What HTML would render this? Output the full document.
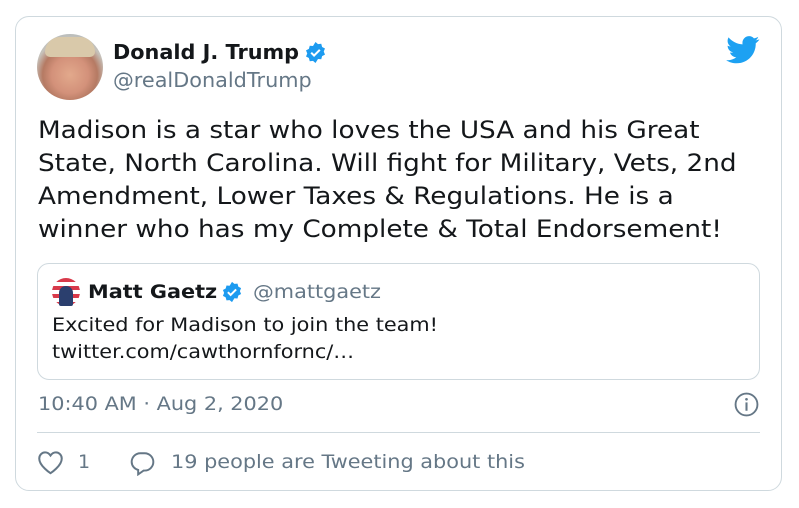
<!DOCTYPE html>
<html><head><meta charset="utf-8"><style>
*{margin:0;padding:0;box-sizing:border-box}
body{width:799px;height:508px;background:#fff;font-family:"DejaVu Sans","Liberation Sans",sans-serif;position:relative;overflow:hidden;color:#14171a}
.card{position:absolute;left:15px;top:16px;width:767px;height:475px;border:1px solid #cfd9de;border-radius:14px}
.a{position:absolute;white-space:nowrap}
.s{transform-origin:0 0;transform:scaleX(1.095)}
</style></head><body>
<div class="card"></div>
<div class="a" style="left:37px;top:34px;width:66px;height:66px;border-radius:50%;background:radial-gradient(circle at 50% 62%,#e2a98c 0,#d3917a 35%,#b57a63 52%,#c6c2bb 68%,#9fb3c2 100%)"></div>
<div class="a" style="left:45px;top:37px;width:50px;height:20px;border-radius:24px 24px 8px 8px;background:#d9c9aa"></div>
<div class="a" style="left:113px;top:38px;font-size:20px;font-weight:bold;line-height:28px;transform-origin:0 0;transform:scaleX(1.04)">Donald J. Trump</div>
<svg class="a" style="left:304px;top:41px" width="23" height="23" viewBox="0 0 24 24"><path fill="#1d9bf0" d="M12 1l2.6 2.2 3.4-.3.9 3.3 3 1.6-1.3 3.2 1.3 3.2-3 1.6-.9 3.3-3.4-.3L12 23l-2.6-2.2-3.4.3-.9-3.3-3-1.6L3.4 13 2.1 9.8l3-1.6.9-3.3 3.4.3z"/><path d="M7.5 12.2l3 3 6-6" stroke="#fff" stroke-width="2.2" fill="none"/></svg>
<div class="a" style="left:113px;top:67px;font-size:20px;color:#657786;line-height:26px;transform-origin:0 0;transform:scaleX(1.04)">@realDonaldTrump</div>
<svg class="a" style="left:726px;top:36px" width="34" height="28" viewBox="0 0 24 20"><path fill="#1da1f2" d="M23.6 2.4c-.9.4-1.8.6-2.8.8 1-.6 1.8-1.5 2.1-2.7-.9.6-2 1-3.1 1.2C19 .7 17.8.1 16.4.1c-2.7 0-4.8 2.2-4.8 4.8 0 .4 0 .8.1 1.1C7.7 5.8 4.1 3.9 1.7 1 1.3 1.7 1 2.6 1 3.5c0 1.7.9 3.2 2.2 4-.8 0-1.5-.2-2.2-.6v.1c0 2.3 1.7 4.3 3.9 4.7-.4.1-.8.2-1.3.2-.3 0-.6 0-.9-.1.6 1.9 2.4 3.300 4.5 3.4-1.700 1.3-3.7 2.1-6 2.1H0c2.1 1.4 4.7 2.2 7.4 2.2 8.9 0 13.7-7.4 13.7-13.7v-.6c1-.7 1.8-1.6 2.5-2.5z"/></svg>
<div class="a s" style="left:38px;top:114px;font-size:24px;line-height:33px;color:#14171a">Madison is a star who loves the USA and his Great<br>State, North Carolina. Will fight for Military, Vets, 2nd<br>Amendment, Lower Taxes &amp; Regulations. He is a<br>winner who has my Complete &amp; Total Endorsement!</div>
<div class="a" style="left:37px;top:263px;width:723px;height:117px;border:1px solid #cfd9de;border-radius:12px"></div>
<div class="a" style="left:52px;top:278px;width:28px;height:28px;border-radius:50%;background:repeating-linear-gradient(180deg,#d8394a 0 4px,#fff 4px 8px)"></div>
<div class="a" style="left:59px;top:286px;width:14px;height:20px;border-radius:7px 7px 2px 2px;background:#2b3f6e"></div>
<div class="a s" style="left:88px;top:279px;font-size:19px;font-weight:bold;line-height:26px">Matt Gaetz</div>
<svg class="a" style="left:221px;top:281px" width="22" height="22" viewBox="0 0 24 24"><path fill="#1d9bf0" d="M12 1l2.6 2.2 3.4-.3.9 3.3 3 1.6-1.3 3.2 1.3 3.2-3 1.6-.9 3.3-3.4-.3L12 23l-2.6-2.2-3.4.3-.9-3.3-3-1.6L3.4 13 2.1 9.8l3-1.6.9-3.3 3.4.3z"/><path d="M7.5 12.2l3 3 6-6" stroke="#fff" stroke-width="2.2" fill="none"/></svg>
<div class="a s" style="left:253px;top:279px;font-size:19px;color:#657786;line-height:26px">@mattgaetz</div>
<div class="a s" style="left:52px;top:312px;font-size:19px;line-height:27px">Excited for Madison to join the team!<br>twitter.com/cawthornfornc/…</div>
<div class="a s" style="left:38px;top:391px;font-size:19px;color:#657786;line-height:26px">10:40 AM · Aug 2, 2020</div>
<svg class="a" style="left:734px;top:392px" width="25" height="25" viewBox="0 0 24 24"><circle cx="12" cy="12" r="10.5" fill="none" stroke="#657786" stroke-width="1.8"/><rect x="11" y="10" width="2" height="8" fill="#657786"/><circle cx="12" cy="7" r="1.3" fill="#657786"/></svg>
<div class="a" style="left:37px;top:432px;width:723px;height:1px;background:#cfd9de"></div>
<svg class="a" style="left:37px;top:450px" width="27" height="25" viewBox="0 0 24 22"><path d="M12 20.5S2 14 2 7.5C2 4.5 4.3 2 7.2 2c2 0 3.6 1.1 4.8 2.8C13.2 3.1 14.8 2 16.8 2 19.7 2 22 4.5 22 7.5 22 14 12 20.5 12 20.5z" fill="none" stroke="#657786" stroke-width="1.8"/></svg>
<div class="a" style="left:78px;top:449px;font-size:19px;color:#657786;line-height:26px">1</div>
<svg class="a" style="left:129px;top:450px" width="27" height="26" viewBox="0 0 24 24"><path d="M10 3h4a8 8 0 0 1 0 16h-1l-5 3.5V18.4A7.8 7.8 0 0 1 2 11a8 8 0 0 1 8-8z" fill="none" stroke="#657786" stroke-width="1.8"/></svg>
<div class="a s" style="left:171px;top:449px;font-size:19px;color:#657786;line-height:26px">19 people are Tweeting about this</div>
</body></html>
